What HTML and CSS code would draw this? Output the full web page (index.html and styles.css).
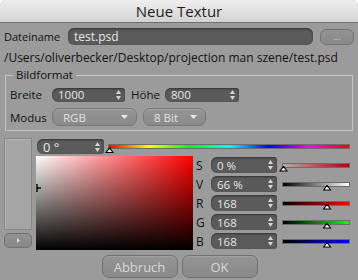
FILE: index.html
```html
<!DOCTYPE html>
<html>
<head>
  <link rel="stylesheet" href="styles.css">
</head>
<body>
  <div class="window">
    <div class="titlebar">Neue Textur</div>

    <div class="file-row">
      <span class="label file-label">Dateiname</span>
      <div class="field name">test.psd</div>
      <button class="dots">...</button>
    </div>
    <div class="path">/Users/oliverbecker/Desktop/projection man szene/test.psd</div>

    <fieldset class="group">
      <legend>Bildformat</legend>
      <div class="row size-row">
        <span class="label col-label">Breite</span>
        <div class="field spin width">1000
          <svg class="spin-icon" viewBox="0 0 5 10"><path d="M0 4L2.5 0L5 4Z M0 6L2.5 10L5 6Z"/></svg>
        </div>
        <span class="label height-label">Höhe</span>
        <div class="field spin height">800
          <svg class="spin-icon" viewBox="0 0 5 10"><path d="M0 4L2.5 0L5 4Z M0 6L2.5 10L5 6Z"/></svg>
        </div>
      </div>
      <div class="row mode-row">
        <span class="label col-label">Modus</span>
        <div class="select mode">RGB
          <svg class="drop-icon" viewBox="0 0 7 4"><path d="M0 0H7L3.5 4Z"/></svg>
        </div>
        <div class="select bits">8 Bit
          <svg class="drop-icon" viewBox="0 0 7 4"><path d="M0 0H7L3.5 4Z"/></svg>
        </div>
      </div>
    </fieldset>

    <div class="color">
      <div class="side">
        <div class="swatch"></div>
        <button class="expand">
          <svg viewBox="0 0 3 5"><path d="M0 0L3 2.5L0 5Z"/></svg>
        </button>
      </div>

      <div class="picker">
        <div class="hue-row">
          <div class="field spin hue">0 °
            <svg class="spin-icon" viewBox="0 0 5 10"><path d="M0 4L2.5 0L5 4Z M0 6L2.5 10L5 6Z"/></svg>
          </div>
          <div class="slider hue-bar">
            <span class="knob" style="left: 0%"></span>
          </div>
        </div>

        <div class="picker-body">
          <div class="square">
            <svg class="cursor" viewBox="0 0 5 8"><path d="M1 0V8M1 4H5"/></svg>
          </div>

          <div class="channels">
            <div class="channel">
              <span class="ch">S</span>
              <div class="field spin">0 %
                <svg class="spin-icon" viewBox="0 0 5 10"><path d="M0 4L2.5 0L5 4Z M0 6L2.5 10L5 6Z"/></svg>
              </div>
              <div class="slider sat"><span class="knob" style="left: 0%"></span></div>
            </div>
            <div class="channel">
              <span class="ch">V</span>
              <div class="field spin">66 %
                <svg class="spin-icon" viewBox="0 0 5 10"><path d="M0 4L2.5 0L5 4Z M0 6L2.5 10L5 6Z"/></svg>
              </div>
              <div class="slider val"><span class="knob" style="left: 66%"></span></div>
            </div>
            <div class="channel">
              <span class="ch">R</span>
              <div class="field spin">168
                <svg class="spin-icon" viewBox="0 0 5 10"><path d="M0 4L2.5 0L5 4Z M0 6L2.5 10L5 6Z"/></svg>
              </div>
              <div class="slider red"><span class="knob" style="left: 66%"></span></div>
            </div>
            <div class="channel">
              <span class="ch">G</span>
              <div class="field spin">168
                <svg class="spin-icon" viewBox="0 0 5 10"><path d="M0 4L2.5 0L5 4Z M0 6L2.5 10L5 6Z"/></svg>
              </div>
              <div class="slider green"><span class="knob" style="left: 66%"></span></div>
            </div>
            <div class="channel">
              <span class="ch">B</span>
              <div class="field spin">168
                <svg class="spin-icon" viewBox="0 0 5 10"><path d="M0 4L2.5 0L5 4Z M0 6L2.5 10L5 6Z"/></svg>
              </div>
              <div class="slider blue"><span class="knob" style="left: 66%"></span></div>
            </div>
          </div>
        </div>
      </div>
    </div>

    <div class="actions">
      <button class="btn">Abbruch</button>
      <button class="btn">OK</button>
    </div>
  </div>
</body>
</html>
```

FILE: styles.css
```css
* {
  box-sizing: border-box;
  margin: 0;
  padding: 0;
}

body {
  background: #ffffff;
  font-family: "Open Sans", "DejaVu Sans", sans-serif;
  font-size: 11.5px;
  color: #111111;
}

.window {
  width: 358px;
  height: 280px;
  background: #9b9b9b;
  border-radius: 6px 6px 0 0;
  overflow: hidden;
  display: flex;
  flex-direction: column;
}

.titlebar {
  height: 23px;
  line-height: 22px;
  text-align: center;
  font-size: 15px;
  color: #1e1e1e;
  background: linear-gradient(#efefef, #d2d2d2);
  border-bottom: 1px solid #707070;
}

/* generic pieces */

.label {
  white-space: nowrap;
}

.field {
  display: flex;
  align-items: center;
  justify-content: space-between;
  height: 16px;
  padding: 0 4px 0 6px;
  background: #5a5a5a;
  color: #e6e6e6;
  border-radius: 6px;
  box-shadow: inset 0 1px 2px rgba(0, 0, 0, 0.45);
  font-size: 11.5px;
  white-space: nowrap;
}

.field.spin {
  border-radius: 6px 3px 3px 6px;
}

.spin-icon {
  width: 5px;
  height: 10px;
  fill: #d6d6d6;
  flex-shrink: 0;
}

.select {
  display: flex;
  align-items: center;
  justify-content: space-between;
  height: 18px;
  padding: 0 8px 0 10px;
  background: linear-gradient(#959595, #8a8a8a);
  border: 1px solid #777777;
  border-radius: 7px;
  box-shadow: inset 0 1px 0 rgba(255, 255, 255, 0.15);
  color: #e2e2e2;
  font-size: 11.5px;
}

.drop-icon {
  width: 7px;
  height: 4px;
  fill: #e8e8e8;
}

button {
  font-family: inherit;
  cursor: pointer;
}

/* file row */

.file-row {
  display: flex;
  align-items: center;
  margin-top: 5px;
  padding-left: 4px;
  height: 17px;
}

.file-label {
  width: 64px;
  font-size: 11px;
}

.field.name {
  width: 245px;
  height: 17px;
  font-size: 12px;
}

.dots {
  width: 34px;
  height: 16px;
  margin-left: 7px;
  background: linear-gradient(#939393, #888888);
  border: 1px solid #727272;
  border-radius: 6px;
  color: #dcdcdc;
  font-size: 9px;
  line-height: 10px;
}

.path {
  margin-top: 4px;
  padding-left: 4px;
  height: 18px;
  line-height: 18px;
  font-size: 12px;
  white-space: nowrap;
}

/* Bildformat */

.group {
  margin: 0 5px;
  padding: 4px;
  border: 1px solid #c4c4c4;
  min-width: 0;
}

.group legend {
  margin-left: 3px;
  padding: 0 3px;
  line-height: 16px;
}

.row {
  display: flex;
  align-items: center;
}

.col-label {
  width: 42px;
}

.size-row .field {
  height: 14px;
}

.field.width {
  width: 73px;
}

.height-label {
  margin-left: 6px;
  width: 34px;
}

.field.height {
  width: 74px;
}

.mode-row {
  margin-top: 6px;
}

.select.mode {
  width: 85px;
}

.select.bits {
  width: 63px;
  margin-left: 6px;
}

/* colour picker */

.color {
  display: flex;
  gap: 4px;
  margin-top: 7px;
  padding-left: 4px;
}

.side {
  width: 28px;
  display: flex;
  flex-direction: column;
}

.swatch {
  height: 92px;
  background: #a5a5a5;
  border: 1px solid #878787;
  box-shadow: inset 1px 1px 0 #b4b4b4;
}

.expand {
  margin-top: 3px;
  height: 15px;
  background: linear-gradient(#929292, #878787);
  border: 1px solid #727272;
  border-radius: 5px;
  display: flex;
  align-items: center;
  justify-content: center;
}

.expand svg {
  width: 3px;
  height: 5px;
  fill: #dddddd;
}

.picker {
  display: flex;
  flex-direction: column;
}

.hue-row {
  display: flex;
  align-items: center;
  margin-top: 1px;
  height: 15px;
}

.field.hue {
  width: 67px;
  height: 15px;
  margin-left: 1px;
  font-size: 13px;
}

.slider {
  position: relative;
  height: 5px;
  border: 1px solid #6c6c6c;
}

.hue-bar {
  width: 242px;
  margin-left: 4px;
  background: linear-gradient(to right, #ff0000, #ffff00, #00ff00, #00ffff, #0000ff, #ff00ff, #ff0000);
}

.knob {
  position: absolute;
  top: 2px;
  width: 9px;
  height: 6px;
  margin-left: -4px;
  background: #000000;
  clip-path: polygon(50% 0, 100% 100%, 0 100%);
}

.knob::after {
  content: "";
  position: absolute;
  left: 2px;
  top: 2px;
  width: 5px;
  height: 3px;
  background: #ffffff;
  clip-path: polygon(50% 0, 100% 100%, 0 100%);
}

.picker-body {
  display: flex;
  margin-top: 2px;
}

.square {
  position: relative;
  width: 157px;
  height: 94px;
  background:
    linear-gradient(to bottom, rgba(0, 0, 0, 0), #000000),
    linear-gradient(to right, #ffffff, #ff0000);
}

.cursor {
  position: absolute;
  left: 0;
  top: 28px;
  width: 5px;
  height: 8px;
  stroke: #000000;
  stroke-width: 1.4;
  fill: none;
}

.channels {
  display: flex;
  flex-direction: column;
  gap: 3px;
  margin-top: 1px;
  margin-left: 3px;
}

.channel {
  display: flex;
  align-items: center;
  height: 16px;
}

.ch {
  width: 15px;
  font-size: 12px;
}

.channel .field {
  width: 66px;
}

.channel .slider {
  width: 68px;
  margin-left: 5px;
}

.sat {
  background: linear-gradient(to right, #b9a9a9, #a80808);
}

.val {
  background: linear-gradient(to right, #000000, #ffffff);
}

.red {
  background: linear-gradient(to right, #000000, #ff0000);
}

.green {
  background: linear-gradient(to right, #000000, #00ff00);
}

.blue {
  background: linear-gradient(to right, #000000, #0000ff);
}

/* dialog buttons */

.actions {
  display: flex;
  justify-content: center;
  gap: 4px;
  margin-top: 5px;
  padding-left: 1px;
}

.btn {
  width: 76px;
  height: 23px;
  background: linear-gradient(#959595, #888888);
  border: 1px solid #707070;
  border-radius: 7px;
  box-shadow: inset 0 1px 0 rgba(255, 255, 255, 0.12);
  color: #d8d8d8;
  font-size: 13px;
}
```
